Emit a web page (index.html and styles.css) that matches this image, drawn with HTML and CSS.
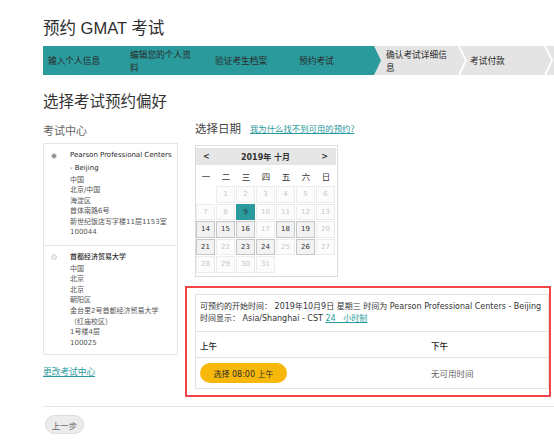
FILE: index.html
```html
<!DOCTYPE html>
<html lang="zh-CN">
<head>
<meta charset="utf-8">
<title>预约 GMAT 考试</title>
<link rel="stylesheet" href="styles.css">
</head>
<body>
<div class="page">
  <h1 class="title">预约 GMAT 考试</h1>

  <div class="steps">
    <div class="step done first"><span>输入个人信息</span></div>
    <div class="step done"><span>编辑您的个人资料</span></div>
    <div class="step done"><span>验证考生档案</span></div>
    <div class="step active"><span>预约考试</span></div>
    <div class="step todo next"><span>确认考试详细信息</span></div>
    <div class="step todo chev"><span>考试付款</span></div>
    <div class="step todo chev last"><span></span></div>
  </div>

  <h2 class="section-title">选择考试预约偏好</h2>

  <div class="columns">
    <div class="left">
      <div class="label">考试中心</div>
      <div class="centers">
        <div class="center">
          <span class="radio checked"></span>
          <div class="info">
            <div class="name">Pearson Professional Centers - Beijing</div>
            <div class="addr">中国</div>
            <div class="addr">北京/中国</div>
            <div class="addr">海淀区</div>
            <div class="addr">首体南路6号</div>
            <div class="addr">新世纪饭店写字楼11层1153室</div>
            <div class="addr">100044</div>
          </div>
        </div>
        <div class="center">
          <span class="radio"></span>
          <div class="info">
            <div class="name">首都经济贸易大学</div>
            <div class="addr">中国</div>
            <div class="addr">北京</div>
            <div class="addr">北京</div>
            <div class="addr">朝阳区</div>
            <div class="addr">金台里2号首都经济贸易大学</div>
            <div class="addr">（红庙校区）</div>
            <div class="addr">1号楼4层</div>
            <div class="addr">100025</div>
          </div>
        </div>
      </div>
      <a class="change-link" href="#">更改考试中心</a>
    </div>

    <div class="right">
      <div class="date-head">
        <span class="date-label">选择日期</span>
        <a class="why-link" href="#">我为什么找不到可用的预约?</a>
      </div>

      <div class="calendar">
        <div class="cal-head">
          <span class="nav">&lt;</span>
          <span class="month">2019年 十月</span>
          <span class="nav">&gt;</span>
        </div>
        <div class="weekdays">
          <span>一</span><span>二</span><span>三</span><span>四</span><span>五</span><span>六</span><span>日</span>
        </div>
        <div class="days">
          <span class="day blank"></span>
          <span class="day">1</span><span class="day">2</span><span class="day">3</span><span class="day">4</span><span class="day">5</span><span class="day">6</span>
          <span class="day">7</span><span class="day">8</span><span class="day selected">9</span><span class="day">10</span><span class="day">11</span><span class="day">12</span><span class="day">13</span>
          <span class="day avail">14</span><span class="day avail">15</span><span class="day avail">16</span><span class="day">17</span><span class="day avail">18</span><span class="day avail">19</span><span class="day">20</span>
          <span class="day avail">21</span><span class="day">22</span><span class="day avail">23</span><span class="day avail">24</span><span class="day">25</span><span class="day avail">26</span><span class="day">27</span>
          <span class="day">28</span><span class="day">29</span><span class="day">30</span><span class="day">31</span>
        </div>
      </div>

      <div class="highlight">
        <div class="slots">
          <div class="slots-info">
            <div>可预约的开始时间： 2019年10月9日 星期三 时间为 Pearson Professional Centers - Beijing</div>
            <div>时间显示： Asia/Shanghai - CST <a class="tz-link" href="#">24&nbsp;&nbsp; 小时制</a></div>
          </div>
          <div class="slots-row slots-head">
            <span>上午</span>
            <span>下午</span>
          </div>
          <div class="slots-row slots-body">
            <span><button class="time-btn" type="button">选择 08:00 上午</button></span>
            <span class="none">无可用时间</span>
          </div>
        </div>
      </div>
    </div>
  </div>

  <div class="rule"></div>
  <button class="back-btn" type="button">上一步</button>
</div>
</body>
</html>
```

FILE: styles.css
```css
* {
  box-sizing: border-box;
  margin: 0;
  padding: 0;
}

html, body {
  overflow: hidden;
}

body {
  width: 554px;
  height: 441px;
  background: #fff;
  font-family: "DejaVu Sans", "Noto Sans CJK SC", sans-serif;
  color: #333;
}

a {
  color: #2b9a9d;
  text-decoration: underline;
}

.page {
  width: 554px;
  padding: 16px 0 0 43px;
}

.title {
  font-family: "Liberation Sans", "Noto Sans CJK SC", sans-serif;
  font-size: 16.5px;
  font-weight: 400;
  line-height: 24px;
  height: 24px;
  color: #2e2e2e;
}

/* progress steps */
.steps {
  margin-top: 6px;
  display: flex;
  width: 511px;
  height: 29px;
  overflow: hidden;
  background: #e4e4e4;
  font-family: "Noto Sans CJK SC", sans-serif;
  font-size: 8.7px;
  line-height: 13px;
  color: #2a2a2a;
}

.step {
  position: relative;
  flex: none;
  width: 85px;
  display: flex;
  align-items: center;
  padding: 0 10px 0 11px;
}

.step.done {
  background: #2b9a9d;
}

.step.first {
  width: 76px;
  padding-left: 5px;
}

.step.active {
  width: 92px;
  padding-left: 10px;
  background: #2b9a9d;
  clip-path: polygon(0 0, 85px 0, 92px 50%, 85px 100%, 0 100%);
  z-index: 1;
}

.step.next {
  width: 84px;
  margin-left: -7px;
  padding-left: 12px;
}

.step.chev {
  width: 86px;
  padding-left: 12px;
}

.step.chev::before {
  content: "";
  position: absolute;
  left: 0;
  top: 0;
  width: 9px;
  height: 100%;
  background: #fff;
  clip-path: polygon(0 0, 2px 0, 9px 50%, 2px 100%, 0 100%, 7px 50%);
}

.step.last {
  flex: 1;
  width: auto;
}

.section-title {
  margin-top: 15px;
  font-family: "Noto Sans CJK SC", sans-serif;
  font-size: 15.5px;
  font-weight: 400;
  line-height: 20px;
  color: #333;
}

/* columns */
.columns {
  margin-top: 10px;
  display: grid;
  grid-template-columns: 135px 354px;
  column-gap: 17px;
  align-items: start;
}

.label {
  font-family: "Noto Sans CJK SC", sans-serif;
  font-size: 11px;
  line-height: 20px;
  height: 20px;
  color: #666;
}

.centers {
  margin-top: 3px;
  border: 1px solid #e6e6e6;
}

.center {
  display: flex;
  align-items: flex-start;
  gap: 13px;
  padding: 5px 2px 6.5px 7px;
}

.center + .center {
  border-top: 1px solid #e6e6e6;
  padding-bottom: 6px;
}

.radio {
  flex: none;
  width: 6px;
  height: 6px;
  margin-top: 3.5px;
  border-radius: 50%;
  background: #ececec;
  border: 1px solid #d6d6d6;
}

.radio.checked {
  background: radial-gradient(circle, #8a8a8a 0 1.6px, #e6e6e6 2px);
  border-color: #cfcfcf;
}

.info {
  flex: 1;
  font-size: 7px;
  color: #555;
}

.name {
  font-weight: 500;
  line-height: 12.5px;
  color: #2a2a2a;
  margin-bottom: 0.5px;
}

.addr {
  line-height: 10.6px;
  white-space: nowrap;
}

.change-link {
  display: block;
  margin-top: 11px;
  font-family: "Noto Sans CJK SC", sans-serif;
  font-size: 8.7px;
  line-height: 12px;
}

/* date column */
.date-head {
  display: flex;
  align-items: center;
  gap: 9px;
  height: 16px;
}

.date-label {
  font-family: "Noto Sans CJK SC", sans-serif;
  font-size: 11.5px;
  line-height: 16px;
  color: #444;
}

.why-link {
  font-family: "Noto Sans CJK SC", sans-serif;
  font-size: 8.4px;
  line-height: 12px;
}

.calendar {
  margin-top: 9px;
  width: 143px;
  border: 1px solid #dcdcdc;
  padding: 1px 1px 3.5px 0;
}

.cal-head {
  margin-top: 1px;
  height: 17px;
  background: #e6e6e6;
  display: flex;
  align-items: center;
  justify-content: space-between;
  padding: 0 8px 0 7px;
  font-weight: 700;
  font-size: 8px;
  color: #333;
}

.month {
  font-family: "DejaVu Sans", "Noto Sans CJK SC", sans-serif;
}

.weekdays {
  height: 21px;
  display: grid;
  grid-template-columns: repeat(7, 20px);
  align-items: center;
  justify-items: center;
  font-family: "Noto Sans CJK SC", sans-serif;
  font-size: 8.5px;
  color: #333;
}

.days {
  display: grid;
  grid-template-columns: repeat(7, 19px);
  grid-auto-rows: 16.5px;
  gap: 1px;
}

.day {
  display: flex;
  align-items: center;
  justify-content: center;
  font-size: 7px;
  color: #c6c6c6;
  border: 1px solid #ececec;
  background: #fcfcfc;
}

.day.blank {
  border: none;
  background: none;
}

.day.avail {
  color: #333;
  background: #f2f2f2;
  border-color: #c6c6c6;
}

.day.selected {
  color: #1d3e3f;
  background: #2b9a9d;
  border-color: #2b9a9d;
}

/* highlighted time slots */
.highlight {
  margin: 9px -2px 0 -10px;
  border: 2px solid #ee4646;
  padding: 6px 0 6px 8px;
}

.slots {
  border: 1px solid #e2e2e2;
  font-size: 8px;
  color: #333;
}

.slots-info {
  padding: 6px 2px 6px 4px;
  line-height: 12px;
  white-space: nowrap;
  border-bottom: 1px solid #e2e2e2;
}

.slots-row {
  display: grid;
  grid-template-columns: 231px 1fr;
  align-items: center;
  padding-left: 4px;
}

.slots-head {
  height: 26px;
  border-bottom: 1px solid #e2e2e2;
  font-family: "Noto Sans CJK SC", sans-serif;
  font-size: 8.5px;
  font-weight: 500;
  color: #222;
}

.slots-body {
  padding-top: 5px;
  padding-bottom: 5px;
}

.time-btn {
  display: block;
  width: 87px;
  height: 20px;
  border: none;
  border-radius: 10px;
  background: #f8b80b;
  font-family: "DejaVu Sans", "Noto Sans CJK SC", sans-serif;
  font-size: 8px;
  color: #2a2a2a;
}

.none {
  font-family: "Noto Sans CJK SC", sans-serif;
  font-size: 8.5px;
  color: #666;
}

.rule {
  margin-top: 9px;
  width: 511px;
  border-top: 1px solid #e6e6e6;
}

.back-btn {
  display: block;
  margin: 8px 0 0 2px;
  width: 39px;
  height: 19px;
  border: 1px solid #dcdcdc;
  border-radius: 10px;
  background: #ececec;
  font-family: "Noto Sans CJK SC", sans-serif;
  font-size: 8.5px;
  color: #666;
}
```
